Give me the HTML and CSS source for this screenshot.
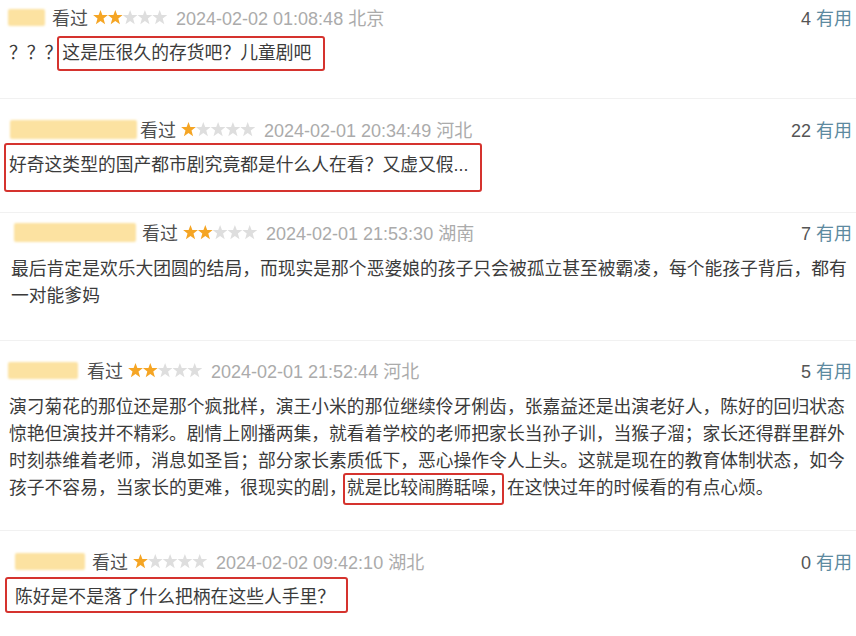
FILE: index.html
```html
<!DOCTYPE html>
<html lang="zh-CN">
<head>
<meta charset="utf-8">
<title>短评</title>
<link rel="stylesheet" href="styles.css">
</head>
<body>
<svg class="sprite" aria-hidden="true">
  <symbol id="star" viewBox="0 0 14 14">
    <polygon points="7,0 8.75,4.6 13.9,4.75 9.8,7.95 11.3,13.3 7,10.2 2.7,13.3 4.2,7.95 0.1,4.75 5.25,4.6"/>
  </symbol>
</svg>
<div class="list">
  <div class="item i1">
    <div class="head">
      <span class="name n1"></span>
      <span class="seen">看过</span>
      <svg class="stars" viewBox="0 0 74 15"><use href="#star" class="on" x="0" width="15" height="15"/><use href="#star" class="on" x="14.8" width="15" height="15"/><use href="#star" class="off" x="29.6" width="15" height="15"/><use href="#star" class="off" x="44.4" width="15" height="15"/><use href="#star" class="off" x="59.2" width="15" height="15"/></svg>
      <span class="time">2024-02-02 01:08:48 北京</span>
      <span class="vote"><span class="num">4</span> <span class="use">有用</span></span>
    </div>
    <p class="text">？？？<span class="mark m1">这是压很久的存货吧？儿童剧吧</span></p>
  </div>

  <div class="item i2">
    <div class="head">
      <span class="name n2"></span>
      <span class="seen">看过</span>
      <svg class="stars" viewBox="0 0 74 15"><use href="#star" class="on" x="0" width="15" height="15"/><use href="#star" class="off" x="14.8" width="15" height="15"/><use href="#star" class="off" x="29.6" width="15" height="15"/><use href="#star" class="off" x="44.4" width="15" height="15"/><use href="#star" class="off" x="59.2" width="15" height="15"/></svg>
      <span class="time">2024-02-01 20:34:49 河北</span>
      <span class="vote"><span class="num">22</span> <span class="use">有用</span></span>
    </div>
    <p class="text"><span class="mark m2">好奇这类型的国产都市剧究竟都是什么人在看？又虚又假...</span></p>
  </div>

  <div class="item i3">
    <div class="head">
      <span class="name n3"></span>
      <span class="seen">看过</span>
      <svg class="stars" viewBox="0 0 74 15"><use href="#star" class="on" x="0" width="15" height="15"/><use href="#star" class="on" x="14.8" width="15" height="15"/><use href="#star" class="off" x="29.6" width="15" height="15"/><use href="#star" class="off" x="44.4" width="15" height="15"/><use href="#star" class="off" x="59.2" width="15" height="15"/></svg>
      <span class="time">2024-02-01 21:53:30 湖南</span>
      <span class="vote"><span class="num">7</span> <span class="use">有用</span></span>
    </div>
    <p class="text">最后肯定是欢乐大团圆的结局，而现实是那个恶婆娘的孩子只会被孤立甚至被霸凌，每个能孩子背后，都有一对能爹妈</p>
  </div>

  <div class="item i4">
    <div class="head">
      <span class="name n4"></span>
      <span class="seen">看过</span>
      <svg class="stars" viewBox="0 0 74 15"><use href="#star" class="on" x="0" width="15" height="15"/><use href="#star" class="on" x="14.8" width="15" height="15"/><use href="#star" class="off" x="29.6" width="15" height="15"/><use href="#star" class="off" x="44.4" width="15" height="15"/><use href="#star" class="off" x="59.2" width="15" height="15"/></svg>
      <span class="time">2024-02-01 21:52:44 河北</span>
      <span class="vote"><span class="num">5</span> <span class="use">有用</span></span>
    </div>
    <p class="text">演刁菊花的那位还是那个疯批样，演王小米的那位继续伶牙俐齿，张嘉益还是出演老好人，陈好的回归状态惊艳但演技并不精彩。剧情上刚播两集，就看着学校的老师把家长当孙子训，当猴子溜；家长还得群里群外时刻恭维着老师，消息如圣旨；部分家长素质低下，恶心操作令人上头。这就是现在的教育体制状态，如今孩子不容易，当家长的更难，很现实的剧，<span class="mark m4">就是比较闹腾聒噪，</span>在这快过年的时候看的有点心烦。</p>
  </div>

  <div class="item i5">
    <div class="head">
      <span class="name n5"></span>
      <span class="seen">看过</span>
      <svg class="stars" viewBox="0 0 74 15"><use href="#star" class="on" x="0" width="15" height="15"/><use href="#star" class="off" x="14.8" width="15" height="15"/><use href="#star" class="off" x="29.6" width="15" height="15"/><use href="#star" class="off" x="44.4" width="15" height="15"/><use href="#star" class="off" x="59.2" width="15" height="15"/></svg>
      <span class="time">2024-02-02 09:42:10 湖北</span>
      <span class="vote"><span class="num">0</span> <span class="use">有用</span></span>
    </div>
    <p class="text"><span class="mark m5">陈好是不是落了什么把柄在这些人手里？</span></p>
  </div>
</div>
</body>
</html>
```

FILE: styles.css
```css
* {
  box-sizing: border-box;
}

body {
  margin: 0;
  background: #ffffff;
  font-family: "Liberation Sans", "Noto Sans CJK SC", sans-serif;
  font-size: 17.8px;
  color: #3b3b3b;
}

.sprite {
  display: block;
  width: 0;
  height: 0;
  overflow: hidden;
}

.list {
  width: 856px;
}

.item {
  padding: 0 4px 0 9px;
  border-bottom: 1px solid #f1f1f1;
}

.item:last-child {
  border-bottom: none;
}

.i1 { padding-top: 5px; padding-bottom: 31px; }
.i2 { padding-top: 18px; padding-bottom: 33px; }
.i3 { padding-top: 7px; padding-bottom: 30px; }
.i4 { padding-top: 17px; padding-bottom: 28px; }
.i5 { padding-top: 18px; padding-bottom: 20px; }

.head {
  display: flex;
  align-items: center;
  height: 24px;
  white-space: nowrap;
}

.name {
  flex: none;
  height: 17px;
  background: #fce2a1;
  border-radius: 2px;
  filter: blur(0.8px);
}

.n1 { width: 37px; margin-left: -1px; margin-right: 7px; }
.n2 { width: 127px; margin-left: 1px; margin-right: 3px; height: 19px; }
.n3 { width: 122px; margin-left: 5px; margin-right: 6px; height: 19px; }
.n4 { width: 70px; margin-left: -1px; margin-right: 9px; }
.n5 { width: 70px; margin-left: 6px; margin-right: 7px; }

.seen {
  font-size: 18px;
  color: #4f4f4f;
}

.stars {
  flex: none;
  width: 74px;
  height: 15px;
  margin-left: 5px;
}

.stars .on {
  fill: #f5a524;
}

.stars .off {
  fill: #dedede;
}

.time {
  margin-left: 9px;
  font-size: 18px;
  color: #ababab;
}

.vote {
  margin-left: auto;
  font-size: 18px;
  color: #555555;
}

.use {
  color: #5d8aa0;
}

.text {
  margin: 0;
  line-height: 27px;
}

.i1 .text { margin-top: 11px; }
.i2 .text { margin-top: 11px; }
.i3 .text { margin-top: 12px; padding-left: 2px; }
.i4 .text { margin-top: 12px; }
.i5 .text { margin-top: 11px; padding-left: 6px; }

.mark {
  position: relative;
}

.mark::after {
  content: "";
  position: absolute;
  border: 2px solid #d5332e;
  border-radius: 3px;
  pointer-events: none;
}

.m1::after { top: -7.5px; bottom: -7.5px; left: -5px; right: -14px; }
.m2::after { top: -12.5px; bottom: -16.5px; left: -5px; right: -14px; }
.m4::after { top: -5.5px; bottom: -6.5px; left: -4px; right: 3px; }
.m5::after { top: -10.5px; bottom: -5.5px; left: -10px; right: -13px; }
```
